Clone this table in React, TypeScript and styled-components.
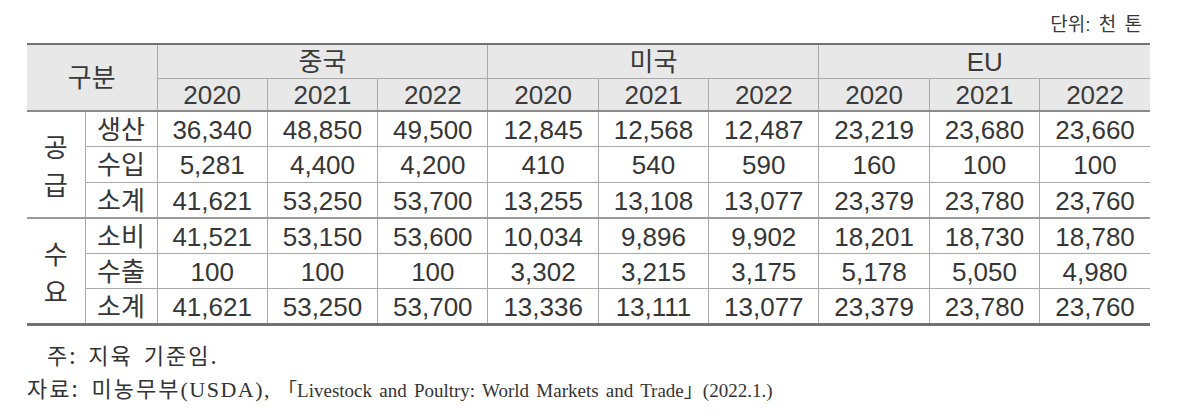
import React from "react";
import styled, { createGlobalStyle } from "styled-components";

const Global = createGlobalStyle`
  html, body { margin: 0; padding: 0; background: #ffffff; }
  body { font-family: "Liberation Sans", "Noto Sans CJK KR", sans-serif; color: #383838; }
`;

const Wrapper = styled.div`
  width: 1123px;
  margin-left: 27px;
  display: flex;
  flex-direction: column;
`;

const Unit = styled.div`
  height: 43px;
  display: flex;
  align-items: center;
  justify-content: flex-end;
  padding: 2px 8px 0 0;
  box-sizing: border-box;
  font-size: 19px;
  color: #3a3a3a;
  word-spacing: 3px;
`;

const Table = styled.table`
  width: 1123px;
  table-layout: fixed;
  border-collapse: collapse;
  border-top: 2px solid #727272;
  border-bottom: 3px solid #727272;
  font-size: 26px;
`;

const HeadRow = styled.tr<{ $h: number }>`
  height: ${(p) => p.$h}px;
`;

const Th = styled.th<{ $thick?: boolean }>`
  background: #e8e8e8;
  font-weight: normal;
  color: #3a3a3a;
  text-align: center;
  padding: 1px 0 0;
  line-height: 1;
  border: 1px solid #a9a9a9;
  border-bottom: ${(p) => (p.$thick ? "2px solid #8a8a8a" : "1px solid #a9a9a9")};
`;

const FirstTh = styled(Th)`
  border-left: none;
`;

const LastTh = styled(Th)`
  border-right: none;
`;

const BodyRow = styled.tr<{ $sep?: boolean }>`
  height: 35.5px;
  & > td { ${(p) => (p.$sep ? "border-top: 2px solid #9a9a9a;" : "")} }
`;

const Td = styled.td`
  text-align: center;
  padding: 2px 0 0;
  line-height: 1;
  border: 1px solid #a9a9a9;
  color: #363636;
  &:last-child { border-right: none; }
`;

const GroupTd = styled(Td)`
  border-left: none;
  line-height: 38px;
  padding-top: 6px;
`;

const Footer = styled.div`
  display: flex;
  flex-direction: column;
  font-family: "Liberation Serif", "Noto Sans CJK KR", serif;
  font-size: 19px;
  color: #333333;
  padding-top: 12px;
`;

const NoteLine = styled.div<{ $indent: number }>`
  height: 33px;
  line-height: 33px;
  padding-left: ${(p) => p.$indent}px;
  white-space: nowrap;
`;

const Ko = styled.span<{ $ls: number; $ws: number }>`
  font-family: "Noto Sans CJK KR", sans-serif;
  font-size: 22px;
  letter-spacing: ${(p) => p.$ls}px;
  word-spacing: ${(p) => p.$ws}px;
`;

const En = styled.span<{ $ws: number; $ls?: number; $size?: number }>`
  font-size: ${(p) => p.$size ?? 19}px;
  word-spacing: ${(p) => p.$ws}px;
  letter-spacing: ${(p) => p.$ls ?? 0}px;
`;

const groups = ["중국", "미국", "EU"];
const years = ["2020", "2021", "2022"];

type Row = { label: string; values: string[] };

const supply: Row[] = [
  { label: "생산", values: ["36,340", "48,850", "49,500", "12,845", "12,568", "12,487", "23,219", "23,680", "23,660"] },
  { label: "수입", values: ["5,281", "4,400", "4,200", "410", "540", "590", "160", "100", "100"] },
  { label: "소계", values: ["41,621", "53,250", "53,700", "13,255", "13,108", "13,077", "23,379", "23,780", "23,760"] },
];

const demand: Row[] = [
  { label: "소비", values: ["41,521", "53,150", "53,600", "10,034", "9,896", "9,902", "18,201", "18,730", "18,780"] },
  { label: "수출", values: ["100", "100", "100", "3,302", "3,215", "3,175", "5,178", "5,050", "4,980"] },
  { label: "소계", values: ["41,621", "53,250", "53,700", "13,336", "13,111", "13,077", "23,379", "23,780", "23,760"] },
];

const Section: React.FC<{ name: [string, string]; rows: Row[]; sep?: boolean }> = ({ name, rows, sep }) => (
  <>
    {rows.map((r, i) => (
      <BodyRow key={r.label + i} $sep={sep && i === 0}>
        {i === 0 && (
          <GroupTd rowSpan={rows.length}>
            {name[0]}
            <br />
            {name[1]}
          </GroupTd>
        )}
        <Td>{r.label}</Td>
        {r.values.map((v, j) => (
          <Td key={j}>{v}</Td>
        ))}
      </BodyRow>
    ))}
  </>
);

export default function App() {
  const dataW = (1123 - 130) / 9;
  return (
    <>
      <Global />
      <Wrapper>
        <Unit>단위: 천 톤</Unit>
        <Table>
          <colgroup>
            <col style={{ width: 58 }} />
            <col style={{ width: 72 }} />
            {Array.from({ length: 9 }).map((_, i) => (
              <col key={i} style={{ width: dataW }} />
            ))}
          </colgroup>
          <thead>
            <HeadRow $h={34}>
              <FirstTh colSpan={2} rowSpan={2} $thick>
                구분
              </FirstTh>
              {groups.map((g, i) =>
                i === groups.length - 1 ? (
                  <LastTh key={g} colSpan={3}>
                    {g}
                  </LastTh>
                ) : (
                  <Th key={g} colSpan={3}>
                    {g}
                  </Th>
                )
              )}
            </HeadRow>
            <HeadRow $h={33}>
              {groups.flatMap((g, gi) =>
                years.map((y, yi) =>
                  gi === groups.length - 1 && yi === years.length - 1 ? (
                    <LastTh key={g + y} $thick>
                      {y}
                    </LastTh>
                  ) : (
                    <Th key={g + y} $thick>
                      {y}
                    </Th>
                  )
                )
              )}
            </HeadRow>
          </thead>
          <tbody>
            <Section name={["공", "급"]} rows={supply} />
            <Section name={["수", "요"]} rows={demand} sep />
          </tbody>
        </Table>
        <Footer>
          <NoteLine $indent={20}>
            <Ko $ls={2} $ws={4}>주: 지육 기준임.</Ko>
          </NoteLine>
          <NoteLine $indent={0}>
            <Ko $ls={2} $ws={5}>자료: 미농무부</Ko>
            <En $ws={0} $ls={1.5} $size={22}>(USDA), </En>
            <En $ws={2.5}>「Livestock and Poultry: World Markets and Trade」(2022.1.)</En>
          </NoteLine>
        </Footer>
      </Wrapper>
    </>
  );
}
